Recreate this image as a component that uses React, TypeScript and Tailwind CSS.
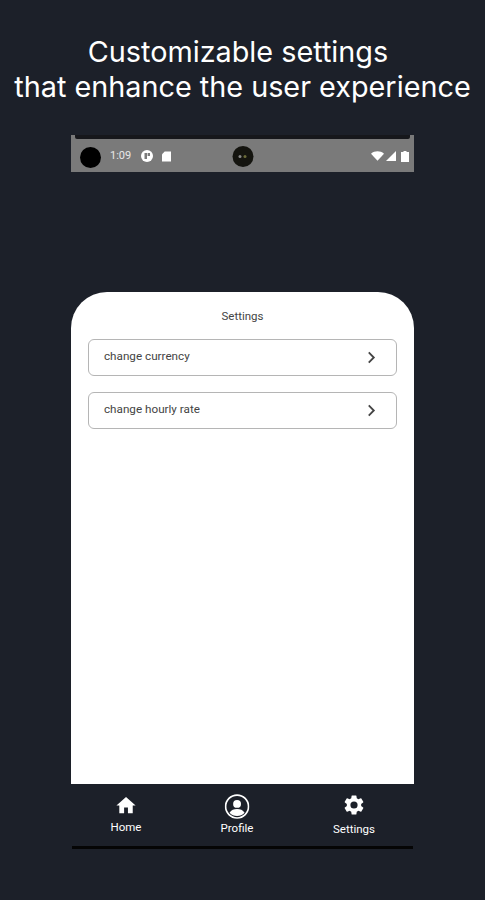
const Chevron = () => (
  <svg viewBox="0 0 12 14" fill="none" stroke="#444" strokeWidth="2" className="h-[13px] w-[11px]">
    <path d="M3 1.5 8.5 7 3 12.5" />
  </svg>
);

const rows = ["change currency", "change hourly rate"];

function StatusBar() {
  return (
    <div className="relative mx-[71px] mt-[31px] flex h-[37px] items-center bg-[#7a7a7a] pt-[5px] text-white">
      <span className="absolute left-[4px] right-[4px] top-0 h-[4px] rounded-b-[2px] bg-[#16171b]" />
      <span className="ml-[9px] mt-[3px] h-[21px] w-[21px] rounded-full bg-black" />
      <span className="ml-[9px] w-[28px] text-[11px] text-[#e8e8e8]">1:09</span>
      <span className="ml-[3px] flex h-[12px] w-[12px] items-center justify-center rounded-full bg-white">
        <svg viewBox="0 0 8 8" className="h-[8px] w-[8px]" fill="#7a7a7a">
          <path d="M1.5 1H4v6H1.5zM4.6 1H7v3H4.6z" />
        </svg>
      </span>
      <svg viewBox="0 0 10 11" className="ml-[9px] h-[11px] w-[9px]" fill="#fff">
        <path d="M3 0h7v11H0V3z" />
      </svg>
      <span className="absolute left-1/2 top-[11px] flex h-[21px] w-[21px] -translate-x-1/2 items-center justify-center gap-[2px] rounded-full bg-[#14140f]">
        <span className="h-[3px] w-[3px] rounded-full bg-[#888]" />
        <span className="h-[3px] w-[3px] rounded-full bg-[#6b6b3a]" />
      </span>
      <div className="ml-auto mr-[5px] flex items-center gap-[2px]">
        <svg viewBox="0 0 14 10" className="h-[10px] w-[13px]" fill="#fff">
          <path d="M0 2.5C4-1 10-1 14 2.5L7 10z" />
        </svg>
        <svg viewBox="0 0 10 10" className="h-[10px] w-[10px]" fill="#fff">
          <path d="M10 0v10H0z" />
        </svg>
        <svg viewBox="0 0 8 11" className="ml-[3px] h-[11px] w-[8px]" fill="#fff">
          <path d="M2.5 0h3v1H8v10H0V1h2.5z" />
        </svg>
      </div>
    </div>
  );
}

function NavItem({ label, icon, className }: { label: string; icon: React.ReactNode; className: string }) {
  return (
    <div className={`absolute flex -translate-x-1/2 flex-col items-center text-[11.5px] leading-none text-white ${className}`}>
      {icon}
      {label}
    </div>
  );
}

export default function App() {
  return (
    <div className="relative h-[900px] w-[485px] overflow-hidden bg-[#1c2029] font-['Roboto',sans-serif]">
      <h1 className="pt-[34px] text-center font-['Inter',sans-serif] text-[28.8px] leading-[35px] text-white">
        <span className="pr-[9px]">Customizable settings</span>
        <br />
        that enhance the user experience
      </h1>

      <StatusBar />

      <main className="mx-[71px] mt-[120px] h-[492px] rounded-t-[36px] bg-white px-[17px]">
        <p className="pt-[17px] text-center text-[11.5px] leading-[14px] text-[#444]">Settings</p>
        <div className="mt-[16px] flex flex-col gap-[16px]">
          {rows.map((row) => (
            <div
              key={row}
              className="flex h-[37px] items-start justify-between rounded-[6px] border border-[#b5b5b5] pl-[15px] pr-[19px]"
            >
              <span className="pt-[9px] text-[11.7px] leading-[14px] text-[#444]">{row}</span>
              <span className="pt-[11px]">
                <Chevron />
              </span>
            </div>
          ))}
        </div>
      </main>

      <nav className="absolute left-0 top-[785px] h-[60px] w-full">
        <NavItem
          label="Home"
          className="left-[126px] top-[9px] gap-[5px]"
          icon={
            <svg viewBox="0 0 24 24" fill="#fff" className="h-[23px] w-[23px]">
              <path d="M10 20v-6h4v6h5v-8h3L12 3 2 12h3v8z" />
            </svg>
          }
        />
        <NavItem
          label="Profile"
          className="left-[237px] top-[9px] gap-[4px]"
          icon={
            <svg viewBox="0 0 24 24" className="h-[25px] w-[25px]">
              <circle cx="12" cy="12" r="11" fill="none" stroke="#fff" strokeWidth="1.6" />
              <circle cx="12" cy="9.5" r="3.8" fill="#fff" />
              <path d="M4.8 18c1.6-2.6 4.2-3.6 7.2-3.6s5.6 1 7.2 3.6a10 10 0 0 1-14.4 0z" fill="#fff" />
            </svg>
          }
        />
        <NavItem
          label="Settings"
          className="left-[354px] top-[8px] gap-[7px]"
          icon={
            <svg viewBox="0 0 24 24" fill="#fff" className="h-[24px] w-[24px]">
              <path d="M19.14 12.94c.04-.3.06-.61.06-.94s-.02-.64-.07-.94l2.03-1.58a.49.49 0 0 0 .12-.61l-1.92-3.32a.49.49 0 0 0-.59-.22l-2.39.96a7 7 0 0 0-1.62-.94l-.36-2.54a.48.48 0 0 0-.48-.41h-3.84a.48.48 0 0 0-.47.41l-.36 2.54c-.59.24-1.13.57-1.62.94l-2.39-.96a.49.49 0 0 0-.59.22L2.74 8.87a.48.48 0 0 0 .12.61l2.03 1.58c-.05.3-.09.63-.09.94s.02.64.07.94l-2.03 1.58a.49.49 0 0 0-.12.61l1.92 3.32c.12.22.37.29.59.22l2.39-.96c.5.38 1.03.7 1.62.94l.36 2.54c.05.24.24.41.48.41h3.84c.24 0 .44-.17.47-.41l.36-2.54c.59-.24 1.13-.56 1.62-.94l2.39.96c.22.08.47 0 .59-.22l1.92-3.32a.48.48 0 0 0-.12-.61zM12 15.6A3.6 3.6 0 1 1 12 8.4a3.6 3.6 0 0 1 0 7.2z" />
            </svg>
          }
        />
      </nav>

      <div className="absolute left-[72px] top-[846px] h-[3px] w-[341px] bg-[#050505]" />
    </div>
  );
}
